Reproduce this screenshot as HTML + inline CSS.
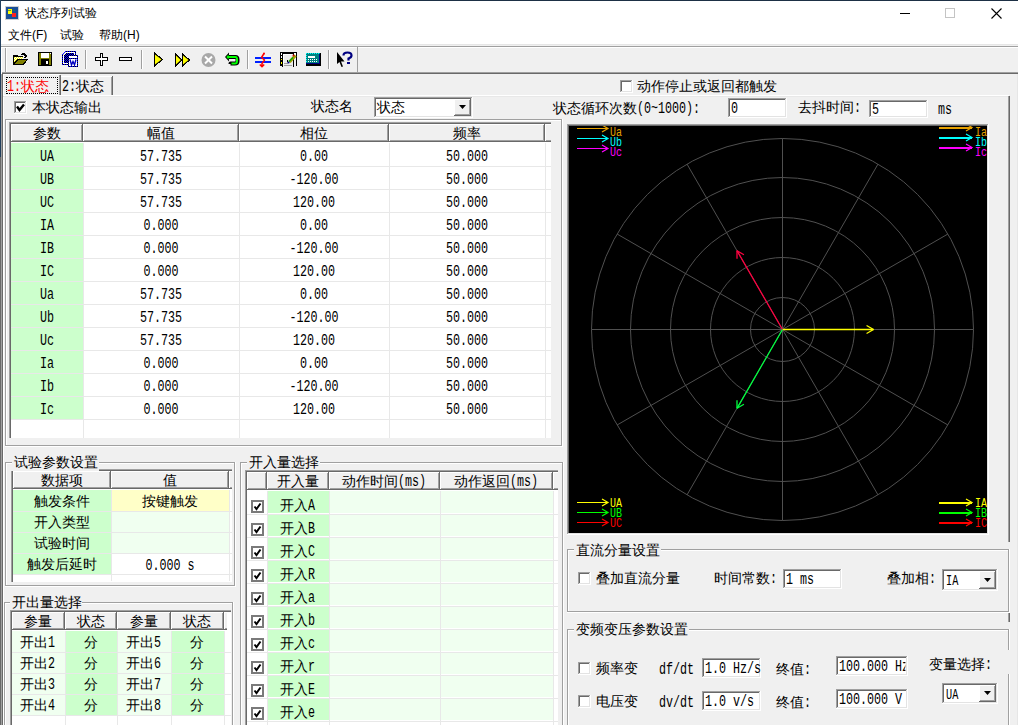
<!DOCTYPE html><html><head><meta charset="utf-8"><style>
html,body{margin:0;padding:0}
body{width:1018px;height:725px;position:relative;overflow:hidden;background:#f0f0f0;font-family:"Liberation Sans",sans-serif}
div,span,svg{position:absolute}
span{white-space:nowrap;line-height:14px;font-size:14px;color:#000}
.c{font-size:14px}
.m{font-family:"Liberation Mono",monospace;font-size:16px;line-height:16px;transform:scaleX(0.73);transform-origin:0 0}
.mi{font-style:normal;display:inline-block;font-family:"Liberation Mono",monospace;font-size:16px;line-height:14px;transform:scaleX(0.73);transform-origin:0 0}
.s{font-size:12px;line-height:12px}
.lg{font-family:"Liberation Mono",monospace;font-size:13px;line-height:13px;transform:scaleX(0.77);transform-origin:0 0}
</style></head><body>
<div style="left:0px;top:0px;width:1018px;height:46px;background:#fff"></div><div style="left:0px;top:0px;width:1018px;height:1px;background:#1d3045"></div><div style="left:0px;top:0px;width:1px;height:157px;background:#213f5d"></div><div style="left:0px;top:157px;width:1px;height:568px;background:#696969"></div><svg style="left:5px;top:6px" width="15" height="15"><rect x="0.5" y="0.5" width="13" height="13" fill="#1a4f96" stroke="#d0d0d0"/><rect x="3" y="3" width="4" height="5" fill="#ffff00"/><rect x="7" y="7" width="4" height="4" fill="#ff2020"/><path d="M3 5 l1 -1 l1 1 l1 -1 M8 4 l2 1" stroke="#408040" fill="none" stroke-width="0.8"/></svg><span class="s" style="left:25px;top:6px;font-size:12px;line-height:14px">状态序列试验</span><span class="s" style="left:8px;top:28px;line-height:14px">文件(F)</span><span class="s" style="left:60px;top:28px;line-height:14px">试验</span><span class="s" style="left:99px;top:28px;line-height:14px">帮助(H)</span><div style="left:900px;top:13px;width:10px;height:1px;background:#000"></div><div style="left:945px;top:8px;width:10px;height:10px;border:1px solid #c4c4c4;box-sizing:border-box"></div><svg style="left:991px;top:8px" width="11" height="11"><path d="M0.5 0.5 L10.5 10.5 M10.5 0.5 L0.5 10.5" stroke="#000" stroke-width="1.1"/></svg><div style="left:1px;top:44px;width:1017px;height:1px;background:#e6e6e6"></div><div style="left:1px;top:45px;width:1017px;height:1px;background:#f0f0f0"></div><div style="left:1px;top:46px;width:1017px;height:1px;background:#a0a0a0"></div><div style="left:1px;top:47px;width:1017px;height:1px;background:#ffffff"></div><div style="left:1px;top:48px;width:1017px;height:25px;background:#f0f0f0"></div><div style="left:2px;top:72px;width:1016px;height:1px;background:#a0a0a0"></div><div style="left:2px;top:73px;width:1016px;height:1px;background:#696969"></div><div style="left:1px;top:47px;width:1px;height:27px;background:#ffffff"></div><div style="left:1px;top:74px;width:1px;height:651px;background:#a0a0a0"></div><div style="left:2px;top:74px;width:1px;height:651px;background:#696969"></div><div style="left:3px;top:74px;width:1px;height:651px;background:#ffffff"></div><div style="left:5px;top:48px;width:1px;height:24px;background:#a0a0a0"></div><div style="left:6px;top:48px;width:1px;height:24px;background:#ffffff"></div><div style="left:85px;top:50px;width:1px;height:19px;background:#a0a0a0"></div><div style="left:86px;top:50px;width:1px;height:19px;background:#ffffff"></div><div style="left:141px;top:50px;width:1px;height:19px;background:#a0a0a0"></div><div style="left:142px;top:50px;width:1px;height:19px;background:#ffffff"></div><div style="left:247px;top:50px;width:1px;height:19px;background:#a0a0a0"></div><div style="left:248px;top:50px;width:1px;height:19px;background:#ffffff"></div><div style="left:328px;top:50px;width:1px;height:19px;background:#a0a0a0"></div><div style="left:329px;top:50px;width:1px;height:19px;background:#ffffff"></div><svg style="left:0px;top:46px" width="360" height="27" shape-rendering="crispEdges">
<defs><pattern id="dith" width="2" height="2" patternUnits="userSpaceOnUse"><rect width="2" height="2" fill="#000"/><rect width="1" height="1" fill="#0000ff"/><rect x="1" y="1" width="1" height="1" fill="#0000ff"/></pattern>
<pattern id="dy" width="2" height="2" patternUnits="userSpaceOnUse"><rect width="2" height="2" fill="#ffff00"/><rect width="1" height="1" fill="#ffffff"/><rect x="1" y="1" width="1" height="1" fill="#ffffff"/></pattern></defs>
<g transform="translate(0,-46)">
<!-- open folder -->
<path d="M13 55h5v1h5v3h-9v5h-1z" fill="#000"/>
<rect x="14" y="57" width="9" height="5" fill="url(#dy)"/>
<path d="M13 64 L17 59 H28 L24 65 H13z" fill="#000"/>
<path d="M15 64 L18 60 H26 L23 64z" fill="#808000"/>
<path d="M21 54 h1 v-1 h3 v1 h1 v1 h1 v2 h-1 v1 h-2 v-1 h1 v-1 h-1 v-1 h-3z" fill="#000"/>
<!-- floppy -->
<rect x="38" y="52" width="14" height="14" fill="#000"/>
<rect x="39" y="53" width="12" height="12" fill="#808000"/>
<rect x="41" y="53" width="8" height="5" fill="#fff"/>
<rect x="41" y="59" width="8" height="6" fill="#000"/>
<rect x="46" y="61" width="2" height="3" fill="#fff"/>
<rect x="50" y="53" width="1" height="1" fill="#fff"/>
<!-- word -->
<path d="M62 54 L65 51 H76 V65 H62 Z" fill="url(#dith)"/>
<path d="M63 54.5 L65.5 52 H75 V64 H63 Z" fill="#fff" shape-rendering="geometricPrecision"/>
<path d="M64 55 L66 53 H74 V63 H64 Z" fill="url(#dith)"/>
<rect x="68" y="55" width="10" height="12" fill="url(#dith)"/>
<rect x="69" y="56" width="8" height="10" fill="#fff"/>
<rect x="69" y="58" width="8" height="1" fill="url(#dith)"/>
<path d="M70 59.5 L71.5 65 L73 61.5 L74.5 65 L76 59.5" stroke="#0000c0" stroke-width="1.4" fill="none" shape-rendering="geometricPrecision"/>
<!-- plus -->
<path d="M100 53 H103 V57 H108 V61 H103 V66 H100 V61 H95 V57 H100z" fill="#000"/>
<path d="M101 54 H102 V58 H107 V60 H102 V65 H101 V60 H96 V58 H101z" fill="#fff"/>
<!-- minus -->
<rect x="119" y="57" width="13" height="4" fill="#000"/>
<rect x="120" y="58" width="11" height="2" fill="#fff"/>
<!-- play -->
<path d="M154 52 L163.5 59.5 L154 67z" fill="#000"/>
<path d="M155 54.5 L161.5 59.5 L155 64.5z" fill="#ffff00" shape-rendering="geometricPrecision"/>
<!-- ff -->
<path d="M175 53 L182.5 60 L175 67z M182 53 L190.5 60 L182 67z" fill="#000"/>
<path d="M176 55.5 L180.8 60 L176 64.5z M183 55.5 L188.5 60 L183 64.5z" fill="#ffff00" shape-rendering="geometricPrecision"/>
<!-- stop gray -->
<circle cx="208.5" cy="60" r="7" fill="#a8a8a8" shape-rendering="geometricPrecision"/>
<path d="M205 56.5 L212 63.5 M212 56.5 L205 63.5" stroke="#fff" stroke-width="2" shape-rendering="geometricPrecision"/>
<!-- u-turn -->
<g shape-rendering="geometricPrecision">
<path d="M228 57 H235.5 Q237.5 57 237.5 59.5 V61 Q237.5 63.5 235 63.5 H230.5 V64" stroke="#000" stroke-width="4" fill="none" stroke-linejoin="round"/>
<path d="M225 57 L229 52.5 L229 61.5z" fill="#000"/>
<path d="M228 57 H235.5 Q237 57 237 59.5 V61 Q237 63.5 235 63.5 H231.5" stroke="#00ff00" stroke-width="2" fill="none"/>
<path d="M226.3 57 L228.5 54.5 L228.5 59.5z" fill="#00ff00"/>
</g>
<!-- blue bars -->
<rect x="255" y="57" width="16" height="2" fill="#0020ff"/>
<rect x="255" y="61" width="16" height="2" fill="#0020ff"/>
<path d="M264 53.5 L261.5 57.5 L264.5 60 L262 63.5 L262 66.5 M259.8 64.5 L262 66.8 L264.2 64.5" stroke="#ff0000" stroke-width="1.5" fill="none" stroke-linejoin="round" shape-rendering="geometricPrecision"/>
<circle cx="264" cy="53.5" r="1" fill="#ff0000" shape-rendering="geometricPrecision"/>
<!-- film -->
<rect x="280" y="52" width="17" height="2" fill="#000"/>
<rect x="280" y="52" width="3" height="14" fill="#000"/>
<rect x="282" y="52" width="1" height="15" fill="#000"/>
<rect x="283" y="54" width="10" height="12" fill="#ececec"/>
<rect x="283" y="54" width="9" height="1" fill="#fff"/>
<rect x="283" y="54" width="1" height="11" fill="#fff"/>
<rect x="293" y="52" width="1" height="15" fill="#000"/>
<rect x="296" y="52" width="1" height="14" fill="#000"/>
<rect x="294" y="52" width="2" height="1" fill="#000"/>
<rect x="281" y="53" width="1" height="2" fill="#fff"/>
<rect x="281" y="56" width="1" height="2" fill="#fff"/>
<rect x="281" y="59" width="1" height="1" fill="#ff0"/>
<rect x="281" y="62" width="1" height="2" fill="#ff0"/>
<rect x="294" y="53" width="2" height="2" fill="#fff"/>
<rect x="284" y="63" width="4" height="1" fill="#a0a0a0"/>
<rect x="284" y="65" width="8" height="1" fill="#a0a0a0"/>
<g shape-rendering="geometricPrecision">
<path d="M289.5 62 L295.5 55.5" stroke="#a0a000" stroke-width="3"/>
<path d="M289 61.5 L293 57.5" stroke="#00b000" stroke-width="1.2"/>
<circle cx="293.5" cy="55.5" r="1" fill="#d00000"/>
<circle cx="288.5" cy="62.5" r="1.1" fill="#000080"/>
<rect x="287" y="60" width="1" height="2" fill="#000"/>
</g>
<!-- teal -->
<rect x="306" y="53" width="15" height="13" fill="#000"/>
<rect x="306" y="53" width="14" height="11" fill="#008080"/>
<path d="M306 53h1v1h-1zM308 53h1v1h-1zM310 53h1v1h-1zM312 53h1v1h-1zM314 53h1v1h-1zM316 53h1v1h-1zM318 53h1v1h-1zM306 55h1v1h-1zM306 57h1v1h-1zM306 59h1v1h-1zM306 61h1v1h-1z" fill="#00ffff"/>
<rect x="319" y="54" width="1" height="10" fill="#000080"/>
<rect x="306" y="63" width="14" height="1" fill="#000080"/>
<rect x="308" y="56" width="7" height="2" fill="#fff"/>
<path d="M308 59h1v1h-1zM310 59h1v1h-1zM312 59h1v1h-1zM314 59h1v1h-1zM316 59h1v1h-1zM308 61h1v1h-1zM310 61h1v1h-1zM312 61h1v1h-1zM314 61h1v1h-1zM316 61h1v1h-1z" fill="#fff"/>
<!-- help -->
<path d="M337 52 L337 64 L339.5 62 L341.5 67 L343 66.5 L341 61.5 L344.5 61.5z" fill="#000" shape-rendering="geometricPrecision"/>
<path d="M343.5 55.5 Q343.5 52.5 347.5 52.5 Q351.5 52.5 351.5 55.5 Q351.5 57.5 348.5 58.5 L348.5 60.5" stroke="#000080" stroke-width="2.2" fill="none" shape-rendering="geometricPrecision"/>
<rect x="347" y="62" width="3" height="2" fill="#000080"/>
</g></svg><div style="left:357px;top:47px;width:1px;height:26px;background:#a0a0a0"></div><div style="left:3px;top:95px;width:1006px;height:1px;background:#ffffff"></div><div style="left:3px;top:96px;width:1005px;height:1px;background:#e8e8e8"></div><div style="left:1008px;top:96px;width:1px;height:446px;background:#a0a0a0"></div><div style="left:1009px;top:96px;width:1px;height:446px;background:#696969"></div><div style="left:3px;top:74px;width:57px;height:1px;background:#ffffff"></div><div style="left:3px;top:74px;width:1px;height:22px;background:#ffffff"></div><div style="left:59px;top:75px;width:1px;height:20px;background:#a0a0a0"></div><div style="left:60px;top:75px;width:1px;height:20px;background:#696969"></div><div style="left:6px;top:77px;width:52px;height:17px;border:1px dotted #000;box-sizing:border-box"></div><span class="c" style="left:7px;top:79px;color:#ff0000"><i class="mi" style="margin-right:-5.18px">1:</i>状态</span><div style="left:61px;top:76px;width:51px;height:1px;background:#ffffff"></div><div style="left:111px;top:77px;width:1px;height:18px;background:#a0a0a0"></div><div style="left:112px;top:76px;width:1px;height:19px;background:#696969"></div><span class="c" style="left:62px;top:79px;"><i class="mi" style="margin-right:-5.18px">2:</i>状态</span><div style="left:14px;top:101px;width:13px;height:13px;background:#fff"></div><div style="left:14px;top:101px;width:12px;height:1px;background:#a0a0a0"></div><div style="left:14px;top:101px;width:1px;height:12px;background:#a0a0a0"></div><div style="left:15px;top:102px;width:10px;height:1px;background:#696969"></div><div style="left:15px;top:102px;width:1px;height:10px;background:#696969"></div><div style="left:14px;top:113px;width:13px;height:1px;background:#ffffff"></div><div style="left:26px;top:101px;width:1px;height:13px;background:#ffffff"></div><div style="left:15px;top:112px;width:11px;height:1px;background:#e3e3e3"></div><div style="left:25px;top:102px;width:1px;height:11px;background:#e3e3e3"></div><svg style="position:absolute;left:14px;top:101px" width="13" height="13"><path d="M3 5.5 L5.5 9 L10 3.5" stroke="#000" stroke-width="2.4" fill="none"/></svg><span class="c" style="left:32px;top:100px;">本状态输出</span><span class="c" style="left:311px;top:99px;">状态名</span><div style="left:374px;top:97px;width:99px;height:21px;background:#fff"></div><div style="left:374px;top:97px;width:98px;height:1px;background:#a0a0a0"></div><div style="left:374px;top:97px;width:1px;height:20px;background:#a0a0a0"></div><div style="left:375px;top:98px;width:96px;height:1px;background:#696969"></div><div style="left:375px;top:98px;width:1px;height:18px;background:#696969"></div><div style="left:374px;top:117px;width:99px;height:1px;background:#ffffff"></div><div style="left:472px;top:97px;width:1px;height:21px;background:#ffffff"></div><div style="left:375px;top:116px;width:97px;height:1px;background:#e3e3e3"></div><div style="left:471px;top:98px;width:1px;height:19px;background:#e3e3e3"></div><div style="left:454px;top:99px;width:17px;height:17px;background:#f0f0f0"></div><div style="left:454px;top:99px;width:16px;height:1px;background:#ffffff"></div><div style="left:454px;top:99px;width:1px;height:16px;background:#ffffff"></div><div style="left:454px;top:115px;width:17px;height:1px;background:#696969"></div><div style="left:470px;top:99px;width:1px;height:17px;background:#696969"></div><div style="left:455px;top:114px;width:15px;height:1px;background:#a0a0a0"></div><div style="left:469px;top:100px;width:1px;height:15px;background:#a0a0a0"></div><svg style="position:absolute;left:454px;top:99px" width="17" height="17"><path d="M5 6 h7 l-3.5 4 z" fill="#000"/></svg><span class="c" style="left:377px;top:100px;">状态</span><div style="left:620px;top:80px;width:13px;height:13px;background:#fff"></div><div style="left:620px;top:80px;width:12px;height:1px;background:#a0a0a0"></div><div style="left:620px;top:80px;width:1px;height:12px;background:#a0a0a0"></div><div style="left:621px;top:81px;width:10px;height:1px;background:#696969"></div><div style="left:621px;top:81px;width:1px;height:10px;background:#696969"></div><div style="left:620px;top:92px;width:13px;height:1px;background:#ffffff"></div><div style="left:632px;top:80px;width:1px;height:13px;background:#ffffff"></div><div style="left:621px;top:91px;width:11px;height:1px;background:#e3e3e3"></div><div style="left:631px;top:81px;width:1px;height:11px;background:#e3e3e3"></div><span class="c" style="left:637px;top:79px;">动作停止或返回都触发</span><span class="c" style="left:553px;top:101px;">状态循环次数<i class="mi" style="margin-right:-23.33px">(0~1000):</i></span><div style="left:728px;top:98px;width:59px;height:20px;background:#fff"></div><div style="left:728px;top:98px;width:58px;height:1px;background:#a0a0a0"></div><div style="left:728px;top:98px;width:1px;height:19px;background:#a0a0a0"></div><div style="left:729px;top:99px;width:56px;height:1px;background:#696969"></div><div style="left:729px;top:99px;width:1px;height:17px;background:#696969"></div><div style="left:728px;top:117px;width:59px;height:1px;background:#ffffff"></div><div style="left:786px;top:98px;width:1px;height:20px;background:#ffffff"></div><div style="left:729px;top:116px;width:57px;height:1px;background:#e3e3e3"></div><div style="left:785px;top:99px;width:1px;height:18px;background:#e3e3e3"></div><span class="m" style="left:731px;top:101px;">0</span><span class="c" style="left:798px;top:100px;">去抖时间<i class="mi" style="margin-right:-2.59px">:</i></span><div style="left:869px;top:100px;width:59px;height:18px;background:#fff"></div><div style="left:869px;top:100px;width:58px;height:1px;background:#a0a0a0"></div><div style="left:869px;top:100px;width:1px;height:17px;background:#a0a0a0"></div><div style="left:870px;top:101px;width:56px;height:1px;background:#696969"></div><div style="left:870px;top:101px;width:1px;height:15px;background:#696969"></div><div style="left:869px;top:117px;width:59px;height:1px;background:#ffffff"></div><div style="left:927px;top:100px;width:1px;height:18px;background:#ffffff"></div><div style="left:870px;top:116px;width:57px;height:1px;background:#e3e3e3"></div><div style="left:926px;top:101px;width:1px;height:16px;background:#e3e3e3"></div><span class="m" style="left:872px;top:102px;">5</span><span class="m" style="left:938px;top:102px;">ms</span><div style="left:5px;top:119px;width:557px;height:327px;border:1px solid #a0a0a0;box-sizing:border-box"></div><div style="left:6px;top:120px;width:555px;height:325px;border:1px solid #ffffff;border-right:none;border-bottom:none;box-sizing:border-box"></div><div style="left:5px;top:446px;width:558px;height:1px;background:#ffffff"></div><div style="left:562px;top:119px;width:1px;height:328px;background:#ffffff"></div><div style="left:9px;top:122px;width:542px;height:316px;background:#fff"></div><div style="left:9px;top:122px;width:542px;height:1px;background:#a0a0a0"></div><div style="left:9px;top:122px;width:1px;height:316px;background:#a0a0a0"></div><div style="left:10px;top:123px;width:541px;height:1px;background:#696969"></div><div style="left:10px;top:123px;width:1px;height:315px;background:#696969"></div><div style="left:9px;top:438px;width:542px;height:1px;background:#f0f0f0"></div><div style="left:11px;top:124px;width:72px;height:18px;background:#f0f0f0"></div><div style="left:11px;top:124px;width:71px;height:1px;background:#ffffff"></div><div style="left:11px;top:124px;width:1px;height:17px;background:#ffffff"></div><div style="left:11px;top:141px;width:72px;height:1px;background:#696969"></div><div style="left:82px;top:124px;width:1px;height:18px;background:#696969"></div><div style="left:12px;top:140px;width:70px;height:1px;background:#a0a0a0"></div><div style="left:81px;top:125px;width:1px;height:16px;background:#a0a0a0"></div><span class="c" style="left:-53px;top:126px;width:200px;text-align:center;">参数</span><div style="left:83px;top:124px;width:156px;height:18px;background:#f0f0f0"></div><div style="left:83px;top:124px;width:155px;height:1px;background:#ffffff"></div><div style="left:83px;top:124px;width:1px;height:17px;background:#ffffff"></div><div style="left:83px;top:141px;width:156px;height:1px;background:#696969"></div><div style="left:238px;top:124px;width:1px;height:18px;background:#696969"></div><div style="left:84px;top:140px;width:154px;height:1px;background:#a0a0a0"></div><div style="left:237px;top:125px;width:1px;height:16px;background:#a0a0a0"></div><span class="c" style="left:61px;top:126px;width:200px;text-align:center;">幅值</span><div style="left:239px;top:124px;width:150px;height:18px;background:#f0f0f0"></div><div style="left:239px;top:124px;width:149px;height:1px;background:#ffffff"></div><div style="left:239px;top:124px;width:1px;height:17px;background:#ffffff"></div><div style="left:239px;top:141px;width:150px;height:1px;background:#696969"></div><div style="left:388px;top:124px;width:1px;height:18px;background:#696969"></div><div style="left:240px;top:140px;width:148px;height:1px;background:#a0a0a0"></div><div style="left:387px;top:125px;width:1px;height:16px;background:#a0a0a0"></div><span class="c" style="left:214px;top:126px;width:200px;text-align:center;">相位</span><div style="left:389px;top:124px;width:156px;height:18px;background:#f0f0f0"></div><div style="left:389px;top:124px;width:155px;height:1px;background:#ffffff"></div><div style="left:389px;top:124px;width:1px;height:17px;background:#ffffff"></div><div style="left:389px;top:141px;width:156px;height:1px;background:#696969"></div><div style="left:544px;top:124px;width:1px;height:18px;background:#696969"></div><div style="left:390px;top:140px;width:154px;height:1px;background:#a0a0a0"></div><div style="left:543px;top:125px;width:1px;height:16px;background:#a0a0a0"></div><span class="c" style="left:367px;top:126px;width:200px;text-align:center;">频率</span><div style="left:545px;top:124px;width:6px;height:18px;background:#f0f0f0"></div><div style="left:545px;top:124px;width:6px;height:1px;background:#ffffff"></div><div style="left:545px;top:124px;width:1px;height:17px;background:#ffffff"></div><div style="left:545px;top:141px;width:6px;height:1px;background:#696969"></div><div style="left:546px;top:140px;width:5px;height:1px;background:#a0a0a0"></div><div style="left:11px;top:142px;width:540px;height:1px;background:#ffffff"></div><div style="left:11px;top:143px;width:72px;height:23px;background:#ccffcc"></div><span class="m" style="left:-53px;top:149px;width:200px;text-align:center;transform-origin:50% 0;">UA</span><span class="m" style="left:61px;top:149px;width:200px;text-align:center;transform-origin:50% 0;">57.735</span><span class="m" style="left:214px;top:149px;width:200px;text-align:center;transform-origin:50% 0;">0.00</span><span class="m" style="left:367px;top:149px;width:200px;text-align:center;transform-origin:50% 0;">50.000</span><div style="left:11px;top:167px;width:72px;height:22px;background:#ccffcc"></div><span class="m" style="left:-53px;top:172px;width:200px;text-align:center;transform-origin:50% 0;">UB</span><span class="m" style="left:61px;top:172px;width:200px;text-align:center;transform-origin:50% 0;">57.735</span><span class="m" style="left:214px;top:172px;width:200px;text-align:center;transform-origin:50% 0;">-120.00</span><span class="m" style="left:367px;top:172px;width:200px;text-align:center;transform-origin:50% 0;">50.000</span><div style="left:11px;top:190px;width:72px;height:22px;background:#ccffcc"></div><span class="m" style="left:-53px;top:195px;width:200px;text-align:center;transform-origin:50% 0;">UC</span><span class="m" style="left:61px;top:195px;width:200px;text-align:center;transform-origin:50% 0;">57.735</span><span class="m" style="left:214px;top:195px;width:200px;text-align:center;transform-origin:50% 0;">120.00</span><span class="m" style="left:367px;top:195px;width:200px;text-align:center;transform-origin:50% 0;">50.000</span><div style="left:11px;top:213px;width:72px;height:22px;background:#ccffcc"></div><span class="m" style="left:-53px;top:218px;width:200px;text-align:center;transform-origin:50% 0;">IA</span><span class="m" style="left:61px;top:218px;width:200px;text-align:center;transform-origin:50% 0;">0.000</span><span class="m" style="left:214px;top:218px;width:200px;text-align:center;transform-origin:50% 0;">0.00</span><span class="m" style="left:367px;top:218px;width:200px;text-align:center;transform-origin:50% 0;">50.000</span><div style="left:11px;top:236px;width:72px;height:22px;background:#ccffcc"></div><span class="m" style="left:-53px;top:241px;width:200px;text-align:center;transform-origin:50% 0;">IB</span><span class="m" style="left:61px;top:241px;width:200px;text-align:center;transform-origin:50% 0;">0.000</span><span class="m" style="left:214px;top:241px;width:200px;text-align:center;transform-origin:50% 0;">-120.00</span><span class="m" style="left:367px;top:241px;width:200px;text-align:center;transform-origin:50% 0;">50.000</span><div style="left:11px;top:259px;width:72px;height:22px;background:#ccffcc"></div><span class="m" style="left:-53px;top:264px;width:200px;text-align:center;transform-origin:50% 0;">IC</span><span class="m" style="left:61px;top:264px;width:200px;text-align:center;transform-origin:50% 0;">0.000</span><span class="m" style="left:214px;top:264px;width:200px;text-align:center;transform-origin:50% 0;">120.00</span><span class="m" style="left:367px;top:264px;width:200px;text-align:center;transform-origin:50% 0;">50.000</span><div style="left:11px;top:282px;width:72px;height:22px;background:#ccffcc"></div><span class="m" style="left:-53px;top:287px;width:200px;text-align:center;transform-origin:50% 0;">Ua</span><span class="m" style="left:61px;top:287px;width:200px;text-align:center;transform-origin:50% 0;">57.735</span><span class="m" style="left:214px;top:287px;width:200px;text-align:center;transform-origin:50% 0;">0.00</span><span class="m" style="left:367px;top:287px;width:200px;text-align:center;transform-origin:50% 0;">50.000</span><div style="left:11px;top:305px;width:72px;height:22px;background:#ccffcc"></div><span class="m" style="left:-53px;top:310px;width:200px;text-align:center;transform-origin:50% 0;">Ub</span><span class="m" style="left:61px;top:310px;width:200px;text-align:center;transform-origin:50% 0;">57.735</span><span class="m" style="left:214px;top:310px;width:200px;text-align:center;transform-origin:50% 0;">-120.00</span><span class="m" style="left:367px;top:310px;width:200px;text-align:center;transform-origin:50% 0;">50.000</span><div style="left:11px;top:328px;width:72px;height:22px;background:#ccffcc"></div><span class="m" style="left:-53px;top:333px;width:200px;text-align:center;transform-origin:50% 0;">Uc</span><span class="m" style="left:61px;top:333px;width:200px;text-align:center;transform-origin:50% 0;">57.735</span><span class="m" style="left:214px;top:333px;width:200px;text-align:center;transform-origin:50% 0;">120.00</span><span class="m" style="left:367px;top:333px;width:200px;text-align:center;transform-origin:50% 0;">50.000</span><div style="left:11px;top:351px;width:72px;height:22px;background:#ccffcc"></div><span class="m" style="left:-53px;top:356px;width:200px;text-align:center;transform-origin:50% 0;">Ia</span><span class="m" style="left:61px;top:356px;width:200px;text-align:center;transform-origin:50% 0;">0.000</span><span class="m" style="left:214px;top:356px;width:200px;text-align:center;transform-origin:50% 0;">0.00</span><span class="m" style="left:367px;top:356px;width:200px;text-align:center;transform-origin:50% 0;">50.000</span><div style="left:11px;top:374px;width:72px;height:22px;background:#ccffcc"></div><span class="m" style="left:-53px;top:379px;width:200px;text-align:center;transform-origin:50% 0;">Ib</span><span class="m" style="left:61px;top:379px;width:200px;text-align:center;transform-origin:50% 0;">0.000</span><span class="m" style="left:214px;top:379px;width:200px;text-align:center;transform-origin:50% 0;">-120.00</span><span class="m" style="left:367px;top:379px;width:200px;text-align:center;transform-origin:50% 0;">50.000</span><div style="left:11px;top:397px;width:72px;height:22px;background:#ccffcc"></div><span class="m" style="left:-53px;top:402px;width:200px;text-align:center;transform-origin:50% 0;">Ic</span><span class="m" style="left:61px;top:402px;width:200px;text-align:center;transform-origin:50% 0;">0.000</span><span class="m" style="left:214px;top:402px;width:200px;text-align:center;transform-origin:50% 0;">120.00</span><span class="m" style="left:367px;top:402px;width:200px;text-align:center;transform-origin:50% 0;">50.000</span><div style="left:83px;top:143px;width:1px;height:295px;background:#e8e8e8"></div><div style="left:239px;top:143px;width:1px;height:295px;background:#e8e8e8"></div><div style="left:389px;top:143px;width:1px;height:295px;background:#e8e8e8"></div><div style="left:545px;top:143px;width:1px;height:295px;background:#e8e8e8"></div><div style="left:11px;top:166px;width:540px;height:1px;background:#e8e8e8"></div><div style="left:11px;top:189px;width:540px;height:1px;background:#e8e8e8"></div><div style="left:11px;top:212px;width:540px;height:1px;background:#e8e8e8"></div><div style="left:11px;top:235px;width:540px;height:1px;background:#e8e8e8"></div><div style="left:11px;top:258px;width:540px;height:1px;background:#e8e8e8"></div><div style="left:11px;top:281px;width:540px;height:1px;background:#e8e8e8"></div><div style="left:11px;top:304px;width:540px;height:1px;background:#e8e8e8"></div><div style="left:11px;top:327px;width:540px;height:1px;background:#e8e8e8"></div><div style="left:11px;top:350px;width:540px;height:1px;background:#e8e8e8"></div><div style="left:11px;top:373px;width:540px;height:1px;background:#e8e8e8"></div><div style="left:11px;top:396px;width:540px;height:1px;background:#e8e8e8"></div><div style="left:11px;top:419px;width:540px;height:1px;background:#e8e8e8"></div><div style="left:567px;top:124px;width:422px;height:411px;background:#000"></div><div style="left:567px;top:124px;width:421px;height:1px;background:#a0a0a0"></div><div style="left:567px;top:124px;width:1px;height:410px;background:#a0a0a0"></div><div style="left:568px;top:125px;width:419px;height:1px;background:#696969"></div><div style="left:568px;top:125px;width:1px;height:408px;background:#696969"></div><div style="left:567px;top:534px;width:422px;height:1px;background:#ffffff"></div><div style="left:988px;top:124px;width:1px;height:411px;background:#ffffff"></div><div style="left:568px;top:533px;width:420px;height:1px;background:#e3e3e3"></div><div style="left:987px;top:125px;width:1px;height:409px;background:#e3e3e3"></div><svg style="left:569px;top:126px" width="418" height="407" shape-rendering="crispEdges"><g stroke="#505050" fill="none" stroke-width="1" shape-rendering="geometricPrecision"><circle cx="213.5" cy="203.5" r="32"/><circle cx="213.5" cy="203.5" r="72"/><circle cx="213.5" cy="203.5" r="112"/><circle cx="213.5" cy="203.5" r="152"/><circle cx="213.5" cy="203.5" r="191"/><line x1="213.5" y1="203.5" x2="404.50" y2="203.50"/><line x1="213.5" y1="203.5" x2="378.91" y2="108.00"/><line x1="213.5" y1="203.5" x2="309.00" y2="38.09"/><line x1="213.5" y1="203.5" x2="213.50" y2="12.50"/><line x1="213.5" y1="203.5" x2="118.00" y2="38.09"/><line x1="213.5" y1="203.5" x2="48.09" y2="108.00"/><line x1="213.5" y1="203.5" x2="22.50" y2="203.50"/><line x1="213.5" y1="203.5" x2="48.09" y2="299.00"/><line x1="213.5" y1="203.5" x2="118.00" y2="368.91"/><line x1="213.5" y1="203.5" x2="213.50" y2="394.50"/><line x1="213.5" y1="203.5" x2="309.00" y2="368.91"/><line x1="213.5" y1="203.5" x2="378.91" y2="299.00"/></g><g shape-rendering="geometricPrecision"><line x1="213.5" y1="203.5" x2="304.50" y2="203.50" stroke="#ffff00" stroke-width="1.3"/><line x1="304.50" y1="203.50" x2="297.57" y2="199.50" stroke="#ffff00" stroke-width="1.3"/><line x1="304.50" y1="203.50" x2="297.57" y2="207.50" stroke="#ffff00" stroke-width="1.3"/><line x1="213.5" y1="203.5" x2="168.00" y2="124.69" stroke="#ff0040" stroke-width="1.3"/><line x1="168.00" y1="124.69" x2="168.00" y2="132.69" stroke="#ff0040" stroke-width="1.3"/><line x1="168.00" y1="124.69" x2="174.93" y2="128.69" stroke="#ff0040" stroke-width="1.3"/><line x1="213.5" y1="203.5" x2="168.00" y2="282.31" stroke="#00ff40" stroke-width="1.3"/><line x1="168.00" y1="282.31" x2="174.93" y2="278.31" stroke="#00ff40" stroke-width="1.3"/><line x1="168.00" y1="282.31" x2="168.00" y2="274.31" stroke="#00ff40" stroke-width="1.3"/></g><rect x="8" y="2" width="31" height="1" fill="#e6a000"/><path d="M33 -1 L39 2.5 L33 6" stroke="#e6a000" fill="none" stroke-width="1.2" shape-rendering="geometricPrecision"/><rect x="8" y="12" width="31" height="1" fill="#00ffff"/><path d="M33 9 L39 12.5 L33 16" stroke="#00ffff" fill="none" stroke-width="1.2" shape-rendering="geometricPrecision"/><rect x="8" y="22" width="31" height="1" fill="#ff00ff"/><path d="M33 19 L39 22.5 L33 26" stroke="#ff00ff" fill="none" stroke-width="1.2" shape-rendering="geometricPrecision"/><rect x="370" y="1" width="33" height="2" fill="#e6a000"/><path d="M397 -2 L403 1.5 L397 5" stroke="#e6a000" fill="none" stroke-width="1.2" shape-rendering="geometricPrecision"/><rect x="370" y="11" width="33" height="2" fill="#00ffff"/><path d="M397 8 L403 11.5 L397 15" stroke="#00ffff" fill="none" stroke-width="1.2" shape-rendering="geometricPrecision"/><rect x="370" y="21" width="33" height="2" fill="#ff00ff"/><path d="M397 18 L403 21.5 L397 25" stroke="#ff00ff" fill="none" stroke-width="1.2" shape-rendering="geometricPrecision"/><rect x="8" y="376" width="31" height="1" fill="#ffff00"/><path d="M33 373 L39 376.5 L33 380" stroke="#ffff00" fill="none" stroke-width="1.2" shape-rendering="geometricPrecision"/><rect x="8" y="386" width="31" height="1" fill="#00ff00"/><path d="M33 383 L39 386.5 L33 390" stroke="#00ff00" fill="none" stroke-width="1.2" shape-rendering="geometricPrecision"/><rect x="8" y="396" width="31" height="1" fill="#ff0000"/><path d="M33 393 L39 396.5 L33 400" stroke="#ff0000" fill="none" stroke-width="1.2" shape-rendering="geometricPrecision"/><rect x="370" y="376" width="33" height="2" fill="#ffff00"/><path d="M397 373 L403 376.5 L397 380" stroke="#ffff00" fill="none" stroke-width="1.2" shape-rendering="geometricPrecision"/><rect x="370" y="386" width="33" height="2" fill="#00ff00"/><path d="M397 383 L403 386.5 L397 390" stroke="#00ff00" fill="none" stroke-width="1.2" shape-rendering="geometricPrecision"/><rect x="370" y="396" width="33" height="2" fill="#ff0000"/><path d="M397 393 L403 396.5 L397 400" stroke="#ff0000" fill="none" stroke-width="1.2" shape-rendering="geometricPrecision"/></svg><span class="lg" style="left:610px;top:126px;color:#e6a000">Ua</span><span class="lg" style="left:610px;top:136px;color:#00ffff">Ub</span><span class="lg" style="left:610px;top:146px;color:#ff00ff">Uc</span><span class="lg" style="left:975px;top:126px;color:#e6a000">Ia</span><span class="lg" style="left:975px;top:136px;color:#00ffff">Ib</span><span class="lg" style="left:975px;top:146px;color:#ff00ff">Ic</span><span class="lg" style="left:610px;top:497px;color:#ffff00">UA</span><span class="lg" style="left:610px;top:507px;color:#00ff00">UB</span><span class="lg" style="left:610px;top:517px;color:#ff0000">UC</span><span class="lg" style="left:975px;top:497px;color:#ffff00">IA</span><span class="lg" style="left:975px;top:507px;color:#00ff00">IB</span><span class="lg" style="left:975px;top:517px;color:#ff0000">IC</span><div style="left:5px;top:462px;width:230px;height:124px;border:1px solid #a0a0a0;box-sizing:border-box"></div><div style="left:6px;top:463px;width:228px;height:122px;border:1px solid #ffffff;border-right:none;border-bottom:none;box-sizing:border-box"></div><div style="left:5px;top:586px;width:231px;height:1px;background:#ffffff"></div><div style="left:235px;top:462px;width:1px;height:125px;background:#ffffff"></div><div style="left:12px;top:461px;width:87px;height:3px;background:#f0f0f0"></div><span class="c" style="left:14px;top:455px;">试验参数设置</span><div style="left:11px;top:469px;width:221px;height:113px;background:#fff"></div><div style="left:11px;top:469px;width:221px;height:1px;background:#a0a0a0"></div><div style="left:11px;top:469px;width:1px;height:113px;background:#a0a0a0"></div><div style="left:12px;top:470px;width:220px;height:1px;background:#696969"></div><div style="left:12px;top:470px;width:1px;height:112px;background:#696969"></div><div style="left:11px;top:469px;width:88px;height:2px;background:#f0f0f0"></div><div style="left:13px;top:471px;width:98px;height:18px;background:#f0f0f0"></div><div style="left:13px;top:471px;width:97px;height:1px;background:#ffffff"></div><div style="left:13px;top:471px;width:1px;height:17px;background:#ffffff"></div><div style="left:13px;top:488px;width:98px;height:1px;background:#696969"></div><div style="left:110px;top:471px;width:1px;height:18px;background:#696969"></div><div style="left:14px;top:487px;width:96px;height:1px;background:#a0a0a0"></div><div style="left:109px;top:472px;width:1px;height:16px;background:#a0a0a0"></div><span class="c" style="left:-38px;top:473px;width:200px;text-align:center;">数据项</span><div style="left:111px;top:471px;width:118px;height:18px;background:#f0f0f0"></div><div style="left:111px;top:471px;width:117px;height:1px;background:#ffffff"></div><div style="left:111px;top:471px;width:1px;height:17px;background:#ffffff"></div><div style="left:111px;top:488px;width:118px;height:1px;background:#696969"></div><div style="left:228px;top:471px;width:1px;height:18px;background:#696969"></div><div style="left:112px;top:487px;width:116px;height:1px;background:#a0a0a0"></div><div style="left:227px;top:472px;width:1px;height:16px;background:#a0a0a0"></div><span class="c" style="left:70px;top:473px;width:200px;text-align:center;">值</span><div style="left:229px;top:471px;width:3px;height:18px;background:#f0f0f0"></div><div style="left:229px;top:471px;width:3px;height:1px;background:#ffffff"></div><div style="left:229px;top:471px;width:1px;height:17px;background:#ffffff"></div><div style="left:229px;top:488px;width:3px;height:1px;background:#696969"></div><div style="left:230px;top:487px;width:2px;height:1px;background:#a0a0a0"></div><div style="left:13px;top:489px;width:219px;height:1px;background:#ffffff"></div><div style="left:13px;top:490px;width:98px;height:21px;background:#ccffcc"></div><div style="left:111px;top:490px;width:118px;height:21px;background:#ffffc8"></div><span class="c" style="left:-38px;top:494px;width:200px;text-align:center;">触发条件</span><span class="c" style="left:70px;top:494px;width:200px;text-align:center;">按键触发</span><div style="left:13px;top:511px;width:98px;height:21px;background:#ccffcc"></div><div style="left:111px;top:511px;width:118px;height:21px;background:#f0fff0"></div><span class="c" style="left:-38px;top:515px;width:200px;text-align:center;">开入类型</span><div style="left:13px;top:532px;width:98px;height:21px;background:#ccffcc"></div><div style="left:111px;top:532px;width:118px;height:21px;background:#f0fff0"></div><span class="c" style="left:-38px;top:536px;width:200px;text-align:center;">试验时间</span><div style="left:13px;top:553px;width:98px;height:21px;background:#ccffcc"></div><div style="left:111px;top:553px;width:118px;height:21px;background:#fff"></div><span class="c" style="left:-38px;top:557px;width:200px;text-align:center;">触发后延时</span><span class="m" style="left:70px;top:558px;width:200px;text-align:center;transform-origin:50% 0;">0.000 s</span><div style="left:111px;top:490px;width:1px;height:91px;background:#e8e8e8"></div><div style="left:229px;top:490px;width:1px;height:91px;background:#e8e8e8"></div><div style="left:13px;top:511px;width:219px;height:1px;background:#e8e8e8"></div><div style="left:13px;top:532px;width:219px;height:1px;background:#e8e8e8"></div><div style="left:13px;top:553px;width:219px;height:1px;background:#e8e8e8"></div><div style="left:13px;top:574px;width:219px;height:1px;background:#e8e8e8"></div><div style="left:4px;top:602px;width:229px;height:129px;border:1px solid #a0a0a0;box-sizing:border-box"></div><div style="left:5px;top:603px;width:227px;height:127px;border:1px solid #ffffff;border-right:none;border-bottom:none;box-sizing:border-box"></div><div style="left:4px;top:731px;width:230px;height:1px;background:#ffffff"></div><div style="left:233px;top:602px;width:1px;height:130px;background:#ffffff"></div><div style="left:10px;top:601px;width:72px;height:3px;background:#f0f0f0"></div><span class="c" style="left:12px;top:595px;">开出量选择</span><div style="left:10px;top:610px;width:221px;height:120px;background:#fff"></div><div style="left:10px;top:610px;width:221px;height:1px;background:#a0a0a0"></div><div style="left:10px;top:610px;width:1px;height:120px;background:#a0a0a0"></div><div style="left:11px;top:611px;width:220px;height:1px;background:#696969"></div><div style="left:11px;top:611px;width:1px;height:120px;background:#696969"></div><div style="left:12px;top:612px;width:53px;height:18px;background:#f0f0f0"></div><div style="left:12px;top:612px;width:52px;height:1px;background:#ffffff"></div><div style="left:12px;top:612px;width:1px;height:17px;background:#ffffff"></div><div style="left:12px;top:629px;width:53px;height:1px;background:#696969"></div><div style="left:64px;top:612px;width:1px;height:18px;background:#696969"></div><div style="left:13px;top:628px;width:51px;height:1px;background:#a0a0a0"></div><div style="left:63px;top:613px;width:1px;height:16px;background:#a0a0a0"></div><span class="c" style="left:-62px;top:614px;width:200px;text-align:center;">参量</span><div style="left:65px;top:612px;width:52px;height:18px;background:#f0f0f0"></div><div style="left:65px;top:612px;width:51px;height:1px;background:#ffffff"></div><div style="left:65px;top:612px;width:1px;height:17px;background:#ffffff"></div><div style="left:65px;top:629px;width:52px;height:1px;background:#696969"></div><div style="left:116px;top:612px;width:1px;height:18px;background:#696969"></div><div style="left:66px;top:628px;width:50px;height:1px;background:#a0a0a0"></div><div style="left:115px;top:613px;width:1px;height:16px;background:#a0a0a0"></div><span class="c" style="left:-9px;top:614px;width:200px;text-align:center;">状态</span><div style="left:117px;top:612px;width:54px;height:18px;background:#f0f0f0"></div><div style="left:117px;top:612px;width:53px;height:1px;background:#ffffff"></div><div style="left:117px;top:612px;width:1px;height:17px;background:#ffffff"></div><div style="left:117px;top:629px;width:54px;height:1px;background:#696969"></div><div style="left:170px;top:612px;width:1px;height:18px;background:#696969"></div><div style="left:118px;top:628px;width:52px;height:1px;background:#a0a0a0"></div><div style="left:169px;top:613px;width:1px;height:16px;background:#a0a0a0"></div><span class="c" style="left:44px;top:614px;width:200px;text-align:center;">参量</span><div style="left:171px;top:612px;width:53px;height:18px;background:#f0f0f0"></div><div style="left:171px;top:612px;width:52px;height:1px;background:#ffffff"></div><div style="left:171px;top:612px;width:1px;height:17px;background:#ffffff"></div><div style="left:171px;top:629px;width:53px;height:1px;background:#696969"></div><div style="left:223px;top:612px;width:1px;height:18px;background:#696969"></div><div style="left:172px;top:628px;width:51px;height:1px;background:#a0a0a0"></div><div style="left:222px;top:613px;width:1px;height:16px;background:#a0a0a0"></div><span class="c" style="left:97px;top:614px;width:200px;text-align:center;">状态</span><div style="left:224px;top:612px;width:3px;height:18px;background:#f0f0f0"></div><div style="left:224px;top:612px;width:3px;height:1px;background:#ffffff"></div><div style="left:224px;top:612px;width:1px;height:17px;background:#ffffff"></div><div style="left:224px;top:629px;width:3px;height:1px;background:#696969"></div><div style="left:225px;top:628px;width:2px;height:1px;background:#a0a0a0"></div><div style="left:12px;top:630px;width:219px;height:1px;background:#ffffff"></div><div style="left:12px;top:631px;width:53px;height:21px;background:#f0fff0"></div><div style="left:65px;top:631px;width:52px;height:21px;background:#ccffcc"></div><div style="left:117px;top:631px;width:54px;height:21px;background:#f0fff0"></div><div style="left:171px;top:631px;width:53px;height:21px;background:#ccffcc"></div><span class="c" style="left:-62px;top:635px;width:200px;text-align:center;">开出<i class="mi" style="margin-right:-2.59px">1</i></span><span class="c" style="left:-9px;top:635px;width:200px;text-align:center;">分</span><span class="c" style="left:44px;top:635px;width:200px;text-align:center;">开出<i class="mi" style="margin-right:-2.59px">5</i></span><span class="c" style="left:97px;top:635px;width:200px;text-align:center;">分</span><div style="left:12px;top:652px;width:53px;height:21px;background:#f0fff0"></div><div style="left:65px;top:652px;width:52px;height:21px;background:#ccffcc"></div><div style="left:117px;top:652px;width:54px;height:21px;background:#f0fff0"></div><div style="left:171px;top:652px;width:53px;height:21px;background:#ccffcc"></div><span class="c" style="left:-62px;top:656px;width:200px;text-align:center;">开出<i class="mi" style="margin-right:-2.59px">2</i></span><span class="c" style="left:-9px;top:656px;width:200px;text-align:center;">分</span><span class="c" style="left:44px;top:656px;width:200px;text-align:center;">开出<i class="mi" style="margin-right:-2.59px">6</i></span><span class="c" style="left:97px;top:656px;width:200px;text-align:center;">分</span><div style="left:12px;top:673px;width:53px;height:21px;background:#f0fff0"></div><div style="left:65px;top:673px;width:52px;height:21px;background:#ccffcc"></div><div style="left:117px;top:673px;width:54px;height:21px;background:#f0fff0"></div><div style="left:171px;top:673px;width:53px;height:21px;background:#ccffcc"></div><span class="c" style="left:-62px;top:677px;width:200px;text-align:center;">开出<i class="mi" style="margin-right:-2.59px">3</i></span><span class="c" style="left:-9px;top:677px;width:200px;text-align:center;">分</span><span class="c" style="left:44px;top:677px;width:200px;text-align:center;">开出<i class="mi" style="margin-right:-2.59px">7</i></span><span class="c" style="left:97px;top:677px;width:200px;text-align:center;">分</span><div style="left:12px;top:694px;width:53px;height:21px;background:#f0fff0"></div><div style="left:65px;top:694px;width:52px;height:21px;background:#ccffcc"></div><div style="left:117px;top:694px;width:54px;height:21px;background:#f0fff0"></div><div style="left:171px;top:694px;width:53px;height:21px;background:#ccffcc"></div><span class="c" style="left:-62px;top:698px;width:200px;text-align:center;">开出<i class="mi" style="margin-right:-2.59px">4</i></span><span class="c" style="left:-9px;top:698px;width:200px;text-align:center;">分</span><span class="c" style="left:44px;top:698px;width:200px;text-align:center;">开出<i class="mi" style="margin-right:-2.59px">8</i></span><span class="c" style="left:97px;top:698px;width:200px;text-align:center;">分</span><div style="left:65px;top:631px;width:1px;height:94px;background:#e8e8e8"></div><div style="left:117px;top:631px;width:1px;height:94px;background:#e8e8e8"></div><div style="left:171px;top:631px;width:1px;height:94px;background:#e8e8e8"></div><div style="left:224px;top:631px;width:1px;height:94px;background:#e8e8e8"></div><div style="left:12px;top:652px;width:219px;height:1px;background:#e8e8e8"></div><div style="left:12px;top:673px;width:219px;height:1px;background:#e8e8e8"></div><div style="left:12px;top:694px;width:219px;height:1px;background:#e8e8e8"></div><div style="left:12px;top:715px;width:219px;height:1px;background:#e8e8e8"></div><div style="left:240px;top:462px;width:323px;height:279px;border:1px solid #a0a0a0;box-sizing:border-box"></div><div style="left:241px;top:463px;width:321px;height:277px;border:1px solid #ffffff;border-right:none;border-bottom:none;box-sizing:border-box"></div><div style="left:240px;top:741px;width:324px;height:1px;background:#ffffff"></div><div style="left:563px;top:462px;width:1px;height:280px;background:#ffffff"></div><div style="left:247px;top:461px;width:73px;height:3px;background:#f0f0f0"></div><span class="c" style="left:249px;top:455px;">开入量选择</span><div style="left:245px;top:470px;width:313px;height:260px;background:#fff"></div><div style="left:245px;top:470px;width:313px;height:1px;background:#a0a0a0"></div><div style="left:245px;top:470px;width:1px;height:260px;background:#a0a0a0"></div><div style="left:246px;top:471px;width:312px;height:1px;background:#696969"></div><div style="left:246px;top:471px;width:1px;height:260px;background:#696969"></div><div style="left:247px;top:472px;width:20px;height:18px;background:#f0f0f0"></div><div style="left:247px;top:472px;width:19px;height:1px;background:#ffffff"></div><div style="left:247px;top:472px;width:1px;height:17px;background:#ffffff"></div><div style="left:247px;top:489px;width:20px;height:1px;background:#696969"></div><div style="left:266px;top:472px;width:1px;height:18px;background:#696969"></div><div style="left:248px;top:488px;width:18px;height:1px;background:#a0a0a0"></div><div style="left:265px;top:473px;width:1px;height:16px;background:#a0a0a0"></div><div style="left:267px;top:472px;width:62px;height:18px;background:#f0f0f0"></div><div style="left:267px;top:472px;width:61px;height:1px;background:#ffffff"></div><div style="left:267px;top:472px;width:1px;height:17px;background:#ffffff"></div><div style="left:267px;top:489px;width:62px;height:1px;background:#696969"></div><div style="left:328px;top:472px;width:1px;height:18px;background:#696969"></div><div style="left:268px;top:488px;width:60px;height:1px;background:#a0a0a0"></div><div style="left:327px;top:473px;width:1px;height:16px;background:#a0a0a0"></div><span class="c" style="left:198px;top:474px;width:200px;text-align:center;">开入量</span><div style="left:329px;top:472px;width:111px;height:18px;background:#f0f0f0"></div><div style="left:329px;top:472px;width:110px;height:1px;background:#ffffff"></div><div style="left:329px;top:472px;width:1px;height:17px;background:#ffffff"></div><div style="left:329px;top:489px;width:111px;height:1px;background:#696969"></div><div style="left:439px;top:472px;width:1px;height:18px;background:#696969"></div><div style="left:330px;top:488px;width:109px;height:1px;background:#a0a0a0"></div><div style="left:438px;top:473px;width:1px;height:16px;background:#a0a0a0"></div><span class="c" style="left:284px;top:474px;width:200px;text-align:center;">动作时间<i class="mi" style="margin-right:-10.37px">(ms)</i></span><div style="left:440px;top:472px;width:113px;height:18px;background:#f0f0f0"></div><div style="left:440px;top:472px;width:112px;height:1px;background:#ffffff"></div><div style="left:440px;top:472px;width:1px;height:17px;background:#ffffff"></div><div style="left:440px;top:489px;width:113px;height:1px;background:#696969"></div><div style="left:552px;top:472px;width:1px;height:18px;background:#696969"></div><div style="left:441px;top:488px;width:111px;height:1px;background:#a0a0a0"></div><div style="left:551px;top:473px;width:1px;height:16px;background:#a0a0a0"></div><span class="c" style="left:396px;top:474px;width:200px;text-align:center;">动作返回<i class="mi" style="margin-right:-10.37px">(ms)</i></span><div style="left:553px;top:472px;width:5px;height:18px;background:#f0f0f0"></div><div style="left:553px;top:472px;width:5px;height:1px;background:#ffffff"></div><div style="left:553px;top:472px;width:1px;height:17px;background:#ffffff"></div><div style="left:553px;top:489px;width:5px;height:1px;background:#696969"></div><div style="left:554px;top:488px;width:4px;height:1px;background:#a0a0a0"></div><div style="left:247px;top:490px;width:311px;height:1px;background:#ffffff"></div><div style="left:267px;top:491px;width:62px;height:22px;background:#ccffcc"></div><div style="left:329px;top:491px;width:224px;height:22px;background:#f0fff0"></div><div style="left:251px;top:500px;width:13px;height:13px;background:#fff;border:2px solid #7a7a7a;box-sizing:border-box"></div><svg style="position:absolute;left:251px;top:500px" width="13" height="13"><path d="M3.5 6.5 L5.5 9 L9.5 3.5" stroke="#000" stroke-width="2" fill="none"/></svg><span class="c" style="left:198px;top:498px;width:200px;text-align:center;">开入<i class="mi" style="margin-right:-2.59px">A</i></span><div style="left:267px;top:514px;width:62px;height:22px;background:#ccffcc"></div><div style="left:329px;top:514px;width:224px;height:22px;background:#f0fff0"></div><div style="left:251px;top:523px;width:13px;height:13px;background:#fff;border:2px solid #7a7a7a;box-sizing:border-box"></div><svg style="position:absolute;left:251px;top:523px" width="13" height="13"><path d="M3.5 6.5 L5.5 9 L9.5 3.5" stroke="#000" stroke-width="2" fill="none"/></svg><span class="c" style="left:198px;top:521px;width:200px;text-align:center;">开入<i class="mi" style="margin-right:-2.59px">B</i></span><div style="left:267px;top:537px;width:62px;height:22px;background:#ccffcc"></div><div style="left:329px;top:537px;width:224px;height:22px;background:#f0fff0"></div><div style="left:251px;top:546px;width:13px;height:13px;background:#fff;border:2px solid #7a7a7a;box-sizing:border-box"></div><svg style="position:absolute;left:251px;top:546px" width="13" height="13"><path d="M3.5 6.5 L5.5 9 L9.5 3.5" stroke="#000" stroke-width="2" fill="none"/></svg><span class="c" style="left:198px;top:544px;width:200px;text-align:center;">开入<i class="mi" style="margin-right:-2.59px">C</i></span><div style="left:267px;top:560px;width:62px;height:22px;background:#ccffcc"></div><div style="left:329px;top:560px;width:224px;height:22px;background:#f0fff0"></div><div style="left:251px;top:569px;width:13px;height:13px;background:#fff;border:2px solid #7a7a7a;box-sizing:border-box"></div><svg style="position:absolute;left:251px;top:569px" width="13" height="13"><path d="M3.5 6.5 L5.5 9 L9.5 3.5" stroke="#000" stroke-width="2" fill="none"/></svg><span class="c" style="left:198px;top:567px;width:200px;text-align:center;">开入<i class="mi" style="margin-right:-2.59px">R</i></span><div style="left:267px;top:583px;width:62px;height:22px;background:#ccffcc"></div><div style="left:329px;top:583px;width:224px;height:22px;background:#f0fff0"></div><div style="left:251px;top:592px;width:13px;height:13px;background:#fff;border:2px solid #7a7a7a;box-sizing:border-box"></div><svg style="position:absolute;left:251px;top:592px" width="13" height="13"><path d="M3.5 6.5 L5.5 9 L9.5 3.5" stroke="#000" stroke-width="2" fill="none"/></svg><span class="c" style="left:198px;top:590px;width:200px;text-align:center;">开入<i class="mi" style="margin-right:-2.59px">a</i></span><div style="left:267px;top:606px;width:62px;height:22px;background:#ccffcc"></div><div style="left:329px;top:606px;width:224px;height:22px;background:#f0fff0"></div><div style="left:251px;top:615px;width:13px;height:13px;background:#fff;border:2px solid #7a7a7a;box-sizing:border-box"></div><svg style="position:absolute;left:251px;top:615px" width="13" height="13"><path d="M3.5 6.5 L5.5 9 L9.5 3.5" stroke="#000" stroke-width="2" fill="none"/></svg><span class="c" style="left:198px;top:613px;width:200px;text-align:center;">开入<i class="mi" style="margin-right:-2.59px">b</i></span><div style="left:267px;top:629px;width:62px;height:22px;background:#ccffcc"></div><div style="left:329px;top:629px;width:224px;height:22px;background:#f0fff0"></div><div style="left:251px;top:638px;width:13px;height:13px;background:#fff;border:2px solid #7a7a7a;box-sizing:border-box"></div><svg style="position:absolute;left:251px;top:638px" width="13" height="13"><path d="M3.5 6.5 L5.5 9 L9.5 3.5" stroke="#000" stroke-width="2" fill="none"/></svg><span class="c" style="left:198px;top:636px;width:200px;text-align:center;">开入<i class="mi" style="margin-right:-2.59px">c</i></span><div style="left:267px;top:652px;width:62px;height:22px;background:#ccffcc"></div><div style="left:329px;top:652px;width:224px;height:22px;background:#f0fff0"></div><div style="left:251px;top:661px;width:13px;height:13px;background:#fff;border:2px solid #7a7a7a;box-sizing:border-box"></div><svg style="position:absolute;left:251px;top:661px" width="13" height="13"><path d="M3.5 6.5 L5.5 9 L9.5 3.5" stroke="#000" stroke-width="2" fill="none"/></svg><span class="c" style="left:198px;top:659px;width:200px;text-align:center;">开入<i class="mi" style="margin-right:-2.59px">r</i></span><div style="left:267px;top:675px;width:62px;height:22px;background:#ccffcc"></div><div style="left:329px;top:675px;width:224px;height:22px;background:#f0fff0"></div><div style="left:251px;top:684px;width:13px;height:13px;background:#fff;border:2px solid #7a7a7a;box-sizing:border-box"></div><svg style="position:absolute;left:251px;top:684px" width="13" height="13"><path d="M3.5 6.5 L5.5 9 L9.5 3.5" stroke="#000" stroke-width="2" fill="none"/></svg><span class="c" style="left:198px;top:682px;width:200px;text-align:center;">开入<i class="mi" style="margin-right:-2.59px">E</i></span><div style="left:267px;top:698px;width:62px;height:22px;background:#ccffcc"></div><div style="left:329px;top:698px;width:224px;height:22px;background:#f0fff0"></div><div style="left:251px;top:707px;width:13px;height:13px;background:#fff;border:2px solid #7a7a7a;box-sizing:border-box"></div><svg style="position:absolute;left:251px;top:707px" width="13" height="13"><path d="M3.5 6.5 L5.5 9 L9.5 3.5" stroke="#000" stroke-width="2" fill="none"/></svg><span class="c" style="left:198px;top:705px;width:200px;text-align:center;">开入<i class="mi" style="margin-right:-2.59px">e</i></span><div style="left:267px;top:491px;width:1px;height:240px;background:#e8e8e8"></div><div style="left:329px;top:491px;width:1px;height:240px;background:#e8e8e8"></div><div style="left:440px;top:491px;width:1px;height:240px;background:#e8e8e8"></div><div style="left:553px;top:491px;width:1px;height:240px;background:#e8e8e8"></div><div style="left:247px;top:514px;width:311px;height:1px;background:#e8e8e8"></div><div style="left:247px;top:537px;width:311px;height:1px;background:#e8e8e8"></div><div style="left:247px;top:560px;width:311px;height:1px;background:#e8e8e8"></div><div style="left:247px;top:583px;width:311px;height:1px;background:#e8e8e8"></div><div style="left:247px;top:606px;width:311px;height:1px;background:#e8e8e8"></div><div style="left:247px;top:629px;width:311px;height:1px;background:#e8e8e8"></div><div style="left:247px;top:652px;width:311px;height:1px;background:#e8e8e8"></div><div style="left:247px;top:675px;width:311px;height:1px;background:#e8e8e8"></div><div style="left:247px;top:698px;width:311px;height:1px;background:#e8e8e8"></div><div style="left:247px;top:721px;width:311px;height:1px;background:#e8e8e8"></div><div style="left:567px;top:549px;width:442px;height:63px;border:1px solid #a0a0a0;box-sizing:border-box"></div><div style="left:568px;top:550px;width:440px;height:61px;border:1px solid #ffffff;border-right:none;border-bottom:none;box-sizing:border-box"></div><div style="left:567px;top:612px;width:443px;height:1px;background:#ffffff"></div><div style="left:1009px;top:549px;width:1px;height:64px;background:#ffffff"></div><div style="left:574px;top:548px;width:87px;height:3px;background:#f0f0f0"></div><span class="c" style="left:576px;top:543px;">直流分量设置</span><div style="left:578px;top:572px;width:13px;height:13px;background:#fff"></div><div style="left:578px;top:572px;width:12px;height:1px;background:#a0a0a0"></div><div style="left:578px;top:572px;width:1px;height:12px;background:#a0a0a0"></div><div style="left:579px;top:573px;width:10px;height:1px;background:#696969"></div><div style="left:579px;top:573px;width:1px;height:10px;background:#696969"></div><div style="left:578px;top:584px;width:13px;height:1px;background:#ffffff"></div><div style="left:590px;top:572px;width:1px;height:13px;background:#ffffff"></div><div style="left:579px;top:583px;width:11px;height:1px;background:#e3e3e3"></div><div style="left:589px;top:573px;width:1px;height:11px;background:#e3e3e3"></div><span class="c" style="left:596px;top:571px;">叠加直流分量</span><span class="c" style="left:714px;top:571px;">时间常数<i class="mi" style="margin-right:-2.59px">:</i></span><div style="left:783px;top:569px;width:59px;height:20px;background:#fff"></div><div style="left:783px;top:569px;width:58px;height:1px;background:#a0a0a0"></div><div style="left:783px;top:569px;width:1px;height:19px;background:#a0a0a0"></div><div style="left:784px;top:570px;width:56px;height:1px;background:#696969"></div><div style="left:784px;top:570px;width:1px;height:17px;background:#696969"></div><div style="left:783px;top:588px;width:59px;height:1px;background:#ffffff"></div><div style="left:841px;top:569px;width:1px;height:20px;background:#ffffff"></div><div style="left:784px;top:587px;width:57px;height:1px;background:#e3e3e3"></div><div style="left:840px;top:570px;width:1px;height:18px;background:#e3e3e3"></div><span class="m" style="left:786px;top:572px;">1 ms</span><span class="c" style="left:887px;top:571px;">叠加相<i class="mi" style="margin-right:-2.59px">:</i></span><div style="left:942px;top:569px;width:56px;height:22px;background:#fff"></div><div style="left:942px;top:569px;width:55px;height:1px;background:#a0a0a0"></div><div style="left:942px;top:569px;width:1px;height:21px;background:#a0a0a0"></div><div style="left:943px;top:570px;width:53px;height:1px;background:#696969"></div><div style="left:943px;top:570px;width:1px;height:19px;background:#696969"></div><div style="left:942px;top:590px;width:56px;height:1px;background:#ffffff"></div><div style="left:997px;top:569px;width:1px;height:22px;background:#ffffff"></div><div style="left:943px;top:589px;width:54px;height:1px;background:#e3e3e3"></div><div style="left:996px;top:570px;width:1px;height:20px;background:#e3e3e3"></div><div style="left:979px;top:571px;width:17px;height:18px;background:#f0f0f0"></div><div style="left:979px;top:571px;width:16px;height:1px;background:#ffffff"></div><div style="left:979px;top:571px;width:1px;height:17px;background:#ffffff"></div><div style="left:979px;top:588px;width:17px;height:1px;background:#696969"></div><div style="left:995px;top:571px;width:1px;height:18px;background:#696969"></div><div style="left:980px;top:587px;width:15px;height:1px;background:#a0a0a0"></div><div style="left:994px;top:572px;width:1px;height:16px;background:#a0a0a0"></div><svg style="position:absolute;left:979px;top:571px" width="17" height="18"><path d="M5 7 h7 l-3.5 4 z" fill="#000"/></svg><span class="m" style="left:946px;top:574px;font-size:14px;line-height:14px">IA</span><div style="left:567px;top:629px;width:442px;height:119px;border:1px solid #a0a0a0;box-sizing:border-box"></div><div style="left:568px;top:630px;width:440px;height:117px;border:1px solid #ffffff;border-right:none;border-bottom:none;box-sizing:border-box"></div><div style="left:567px;top:748px;width:443px;height:1px;background:#ffffff"></div><div style="left:1009px;top:629px;width:1px;height:120px;background:#ffffff"></div><div style="left:574px;top:628px;width:115px;height:3px;background:#f0f0f0"></div><span class="c" style="left:576px;top:622px;">变频变压参数设置</span><div style="left:1008px;top:613px;width:1px;height:9px;background:#a0a0a0"></div><div style="left:1009px;top:613px;width:1px;height:9px;background:#696969"></div><div style="left:1017px;top:74px;width:1px;height:651px;background:#e6e6e6"></div><div style="left:578px;top:662px;width:13px;height:13px;background:#fff"></div><div style="left:578px;top:662px;width:12px;height:1px;background:#a0a0a0"></div><div style="left:578px;top:662px;width:1px;height:12px;background:#a0a0a0"></div><div style="left:579px;top:663px;width:10px;height:1px;background:#696969"></div><div style="left:579px;top:663px;width:1px;height:10px;background:#696969"></div><div style="left:578px;top:674px;width:13px;height:1px;background:#ffffff"></div><div style="left:590px;top:662px;width:1px;height:13px;background:#ffffff"></div><div style="left:579px;top:673px;width:11px;height:1px;background:#e3e3e3"></div><div style="left:589px;top:663px;width:1px;height:11px;background:#e3e3e3"></div><span class="c" style="left:596px;top:661px;">频率变</span><span class="m" style="left:659px;top:662px;">df/dt</span><div style="left:702px;top:658px;width:59px;height:20px;background:#fff"></div><div style="left:702px;top:658px;width:58px;height:1px;background:#a0a0a0"></div><div style="left:702px;top:658px;width:1px;height:19px;background:#a0a0a0"></div><div style="left:703px;top:659px;width:56px;height:1px;background:#696969"></div><div style="left:703px;top:659px;width:1px;height:17px;background:#696969"></div><div style="left:702px;top:677px;width:59px;height:1px;background:#ffffff"></div><div style="left:760px;top:658px;width:1px;height:20px;background:#ffffff"></div><div style="left:703px;top:676px;width:57px;height:1px;background:#e3e3e3"></div><div style="left:759px;top:659px;width:1px;height:18px;background:#e3e3e3"></div><span class="m" style="left:705px;top:661px;">1.0 Hz/s</span><span class="c" style="left:776px;top:662px;">终值<i class="mi" style="margin-right:-2.59px">:</i></span><div style="left:836px;top:656px;width:72px;height:20px;background:#fff"></div><div style="left:836px;top:656px;width:71px;height:1px;background:#a0a0a0"></div><div style="left:836px;top:656px;width:1px;height:19px;background:#a0a0a0"></div><div style="left:837px;top:657px;width:69px;height:1px;background:#696969"></div><div style="left:837px;top:657px;width:1px;height:17px;background:#696969"></div><div style="left:836px;top:675px;width:72px;height:1px;background:#ffffff"></div><div style="left:907px;top:656px;width:1px;height:20px;background:#ffffff"></div><div style="left:837px;top:674px;width:70px;height:1px;background:#e3e3e3"></div><div style="left:906px;top:657px;width:1px;height:18px;background:#e3e3e3"></div><span class="m" style="left:839px;top:659px;width:91px;overflow:hidden">100.000 Hz</span><div style="left:925px;top:650px;width:88px;height:24px;background:#f0f0f0"></div><span class="c" style="left:929px;top:657px;">变量选择<i class="mi" style="margin-right:-2.59px">:</i></span><div style="left:578px;top:695px;width:13px;height:13px;background:#fff"></div><div style="left:578px;top:695px;width:12px;height:1px;background:#a0a0a0"></div><div style="left:578px;top:695px;width:1px;height:12px;background:#a0a0a0"></div><div style="left:579px;top:696px;width:10px;height:1px;background:#696969"></div><div style="left:579px;top:696px;width:1px;height:10px;background:#696969"></div><div style="left:578px;top:707px;width:13px;height:1px;background:#ffffff"></div><div style="left:590px;top:695px;width:1px;height:13px;background:#ffffff"></div><div style="left:579px;top:706px;width:11px;height:1px;background:#e3e3e3"></div><div style="left:589px;top:696px;width:1px;height:11px;background:#e3e3e3"></div><span class="c" style="left:596px;top:694px;">电压变</span><span class="m" style="left:659px;top:695px;">dv/dt</span><div style="left:702px;top:691px;width:59px;height:20px;background:#fff"></div><div style="left:702px;top:691px;width:58px;height:1px;background:#a0a0a0"></div><div style="left:702px;top:691px;width:1px;height:19px;background:#a0a0a0"></div><div style="left:703px;top:692px;width:56px;height:1px;background:#696969"></div><div style="left:703px;top:692px;width:1px;height:17px;background:#696969"></div><div style="left:702px;top:710px;width:59px;height:1px;background:#ffffff"></div><div style="left:760px;top:691px;width:1px;height:20px;background:#ffffff"></div><div style="left:703px;top:709px;width:57px;height:1px;background:#e3e3e3"></div><div style="left:759px;top:692px;width:1px;height:18px;background:#e3e3e3"></div><span class="m" style="left:705px;top:694px;">1.0 v/s</span><span class="c" style="left:776px;top:695px;">终值<i class="mi" style="margin-right:-2.59px">:</i></span><div style="left:836px;top:689px;width:72px;height:20px;background:#fff"></div><div style="left:836px;top:689px;width:71px;height:1px;background:#a0a0a0"></div><div style="left:836px;top:689px;width:1px;height:19px;background:#a0a0a0"></div><div style="left:837px;top:690px;width:69px;height:1px;background:#696969"></div><div style="left:837px;top:690px;width:1px;height:17px;background:#696969"></div><div style="left:836px;top:708px;width:72px;height:1px;background:#ffffff"></div><div style="left:907px;top:689px;width:1px;height:20px;background:#ffffff"></div><div style="left:837px;top:707px;width:70px;height:1px;background:#e3e3e3"></div><div style="left:906px;top:690px;width:1px;height:18px;background:#e3e3e3"></div><span class="m" style="left:839px;top:692px;">100.000 V</span><div style="left:942px;top:683px;width:56px;height:21px;background:#fff"></div><div style="left:942px;top:683px;width:55px;height:1px;background:#a0a0a0"></div><div style="left:942px;top:683px;width:1px;height:20px;background:#a0a0a0"></div><div style="left:943px;top:684px;width:53px;height:1px;background:#696969"></div><div style="left:943px;top:684px;width:1px;height:18px;background:#696969"></div><div style="left:942px;top:703px;width:56px;height:1px;background:#ffffff"></div><div style="left:997px;top:683px;width:1px;height:21px;background:#ffffff"></div><div style="left:943px;top:702px;width:54px;height:1px;background:#e3e3e3"></div><div style="left:996px;top:684px;width:1px;height:19px;background:#e3e3e3"></div><div style="left:979px;top:685px;width:17px;height:17px;background:#f0f0f0"></div><div style="left:979px;top:685px;width:16px;height:1px;background:#ffffff"></div><div style="left:979px;top:685px;width:1px;height:16px;background:#ffffff"></div><div style="left:979px;top:701px;width:17px;height:1px;background:#696969"></div><div style="left:995px;top:685px;width:1px;height:17px;background:#696969"></div><div style="left:980px;top:700px;width:15px;height:1px;background:#a0a0a0"></div><div style="left:994px;top:686px;width:1px;height:15px;background:#a0a0a0"></div><svg style="position:absolute;left:979px;top:685px" width="17" height="17"><path d="M5 6 h7 l-3.5 4 z" fill="#000"/></svg><span class="m" style="left:946px;top:688px;font-size:14px;line-height:14px">UA</span></body></html>
